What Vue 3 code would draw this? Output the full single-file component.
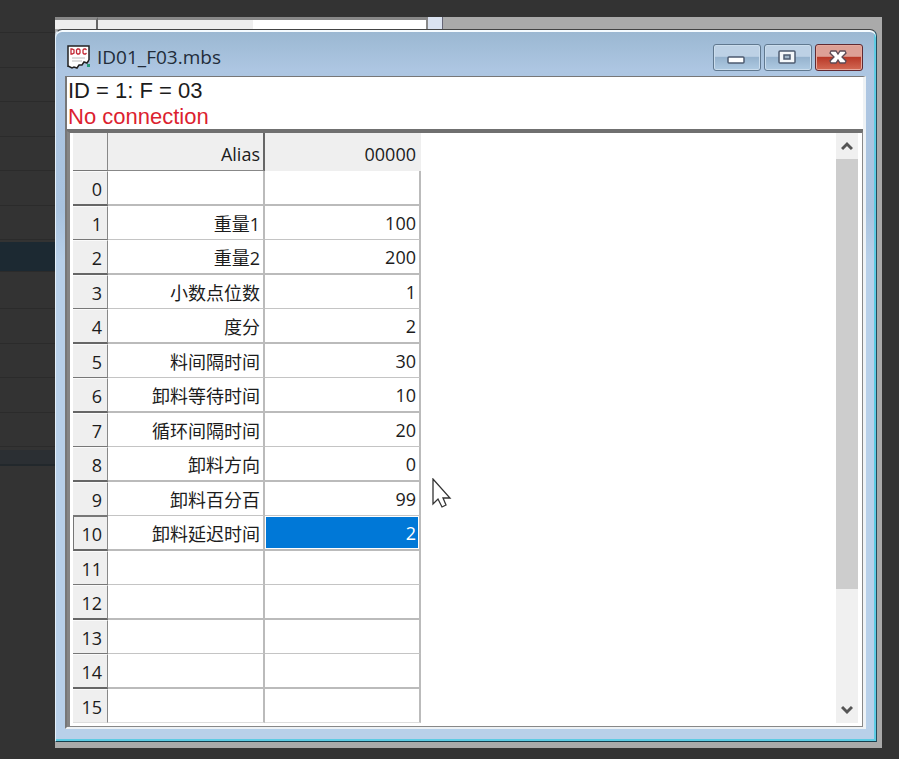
<template>
  <div class="page">
    <div class="backdrop" aria-hidden="true">
      <div
        v-for="n in 13"
        :key="n"
        class="backdrop-row"
        :class="{ active: n === 8 }"
      ></div>
      <div class="backdrop-bar"></div>
    </div>
    <div class="workspace">
      <div class="behind" aria-hidden="true">
        <span class="behind-head"></span>
        <span class="behind-cell"></span>
        <span class="behind-blank"></span>
        <span class="behind-edge"></span>
      </div>
      <section class="window">
        <header class="title-bar">
          <svg class="doc-icon" viewBox="0 0 24 24" aria-hidden="true">
            <path
              d="M1 1H22V15L20 18L17 17L15 20L12 20L10 23L7 22L5 23L1 21Z"
              fill="#fff"
            />
            <path
              d="M1 22V1H22V15"
              fill="none"
              stroke="#222"
              stroke-width="1.5"
            />
            <path
              d="M1 21L5 23L7 22L10 23L12 20H15L17 17L20 18L22 15"
              fill="none"
              stroke="#222"
              stroke-width="1.5"
            />
            <path
              d="M4 4V9H5L7 8V5L5 4ZM10.500 4H12L13 5V8L12 9H10.500L9.500 8V5ZM19.500 5L18.500 4H17L16 5V8L17 9H18.500L19.500 8"
              fill="none"
              stroke="#c32a36"
              stroke-width="1.3"
            />
            <path d="M5 13H18M5 16H15" stroke="#bbb" stroke-width="1" />
            <path d="M20 19H23V22H20Z" fill="#269b77" />
          </svg>
          <h1 class="title">ID01_F03.mbs</h1>
          <div class="controls">
            <button type="button" class="control" aria-label="Minimize">
              <svg viewBox="0 0 46 25">
                <rect x="14" y="12" width="16" height="6" rx="1" fill="#fff" stroke="#4d5b70" stroke-width="1.5" />
              </svg>
            </button>
            <button type="button" class="control" aria-label="Maximize">
              <svg viewBox="0 0 46 25">
                <rect x="14" y="6" width="16" height="12" rx="1" fill="#f5f8fa" stroke="#4d5b70" stroke-width="1.5" />
                <rect x="19" y="10" width="6" height="4" fill="#9fb4c6" stroke="#4d5b70" stroke-width="1.5" />
              </svg>
            </button>
            <button type="button" class="control close" aria-label="Close">
              <svg viewBox="0 0 46 25">
                <path
                  d="M15 6H20L22 9L24 6H29L30 8L26 12L30 16L29 18H24L22 15L20 18H15L14 16L18 12L14 8Z"
                  fill="#fff"
                  stroke="#5b4a55"
                  stroke-width="1.3"
                />
              </svg>
            </button>
          </div>
        </header>
        <div class="client">
          <div class="status">
            <p>ID = 1: F = 03</p>
            <p class="error">No connection</p>
          </div>
          <div class="grid-frame">
            <div class="grid-area">
              <table class="grid">
                <thead>
                  <tr>
                    <th class="index"></th>
                    <th class="alias">Alias</th>
                    <th class="value">00000</th>
                  </tr>
                </thead>
                <tbody>
                  <tr
                    v-for="(row, index) in rows"
                    :key="index"
                    :class="{ selected: index === selectedIndex }"
                    @click="selectedIndex = index"
                  >
                    <th class="index">{{ index }}</th>
                    <td>{{ row.alias }}</td>
                    <td class="value">
                      <span>{{ row.value }}</span>
                    </td>
                  </tr>
                </tbody>
              </table>
            </div>
            <div class="scrollbar">
              <button type="button" aria-label="Scroll up">
                <svg viewBox="0 0 12 10">
                  <path d="M1 8L6 3L11 8" />
                </svg>
              </button>
              <div class="track">
                <div class="thumb"></div>
              </div>
              <button type="button" aria-label="Scroll down">
                <svg viewBox="0 0 12 10">
                  <path d="M1 2L6 7L11 2" />
                </svg>
              </button>
            </div>
          </div>
        </div>
      </section>
    </div>
    <svg class="pointer" viewBox="0 0 20 30" aria-hidden="true">
      <path
        d="M1 1V26L6 21L10 29L14 27L11 20H18Z"
        fill="#fff"
        stroke="#333"
        stroke-width="1.3"
      />
    </svg>
  </div>
</template>

<script setup>
import { ref } from "vue";

const selectedIndex = ref(10);

const rows = [
  { alias: "", value: "" },
  { alias: "重量1", value: 100 },
  { alias: "重量2", value: 200 },
  { alias: "小数点位数", value: 1 },
  { alias: "度分", value: 2 },
  { alias: "料间隔时间", value: 30 },
  { alias: "卸料等待时间", value: 10 },
  { alias: "循环间隔时间", value: 20 },
  { alias: "卸料方向", value: 0 },
  { alias: "卸料百分百", value: 99 },
  { alias: "卸料延迟时间", value: 2 },
  { alias: "", value: "" },
  { alias: "", value: "" },
  { alias: "", value: "" },
  { alias: "", value: "" },
  { alias: "", value: "" },
];
</script>

<style>
body {
  margin: 0;
  background: #333;
}
</style>

<style scoped>
.page {
  position: relative;
  box-sizing: border-box;
  display: flex;
  min-height: 100vh;
  padding: 17px 17px 11px 55px;
  background: #333;
  font-family: "Open Sans", "Noto Sans CJK SC", sans-serif;
  font-size: 18px;
  color: #1c1c1c;
}

/* 背景表格 */
.backdrop {
  position: absolute;
  top: 0;
  left: 0;
  width: 55px;
}
.backdrop-row {
  box-sizing: border-box;
  height: 34px;
  border-bottom: 1px solid #2b2b2b;
}
.backdrop-row:nth-child(even) {
  height: 35px;
}
.backdrop-row:first-child {
  height: 33px;
}
.backdrop-row.active {
  height: 32px;
  margin-bottom: 3px;
  background: #1c2932;
  border-top: 2px solid #333;
}
.backdrop-bar {
  height: 14px;
  margin-top: 3px;
  background: #2b2f33;
  border-bottom: 2px solid #22282c;
}

.workspace {
  position: relative;
  box-sizing: border-box;
  display: flex;
  flex: 1;
  flex-direction: column;
  min-width: 0;
  padding: 0 5px 6px 0;
  background: #aaa;
}
.behind {
  display: flex;
  height: 12px;
}
.behind span {
  box-sizing: border-box;
  border-top: 3px solid #888;
}
.behind-head {
  width: 43px;
  background: #eee;
  border-right: 2px solid #666;
}
.behind-cell {
  width: 155px;
  background: #eee;
}
.behind-blank {
  width: 173px;
  background: #fff;
}
.behind .behind-edge {
  width: 17px;
  background: #dbe3f1;
  border-top: 0;
  border-right: 1px solid #667;
  border-left: 2px solid #888;
}

/* 窗口 */
.window {
  display: flex;
  flex: 1;
  flex-direction: column;
  box-sizing: border-box;
  padding: 0 10px 12px 9px;
  background: linear-gradient(#9ab7d1, #adc6e2 40px, #a9c3df 180px, #b8d0e9 230px);
  border: 1px solid #444;
  border-left-color: #e4f0fa;
  border-right-color: #244a5c;
  border-bottom-color: #173f4c;
  border-radius: 7px 7px 0 0;
  box-shadow: inset 0 2px #f5fbff, inset -2px -2px #5dcbe3;
}
.title-bar {
  display: flex;
  align-items: center;
  box-sizing: border-box;
  height: 46px;
  padding: 8px 3px 0 2px;
}
.doc-icon {
  width: 24px;
  height: 24px;
}
.title {
  flex: 1;
  margin: 0 0 0 6px;
  font-size: 19px;
  font-weight: 400;
  line-height: 28px;
  color: #222c3a;
}
.controls {
  display: flex;
  gap: 3px;
}
.control {
  box-sizing: border-box;
  width: 48px;
  height: 27px;
  padding: 0;
  background: linear-gradient(#bdd1e5 0 45%, #96b3ce 50%, #afcae2);
  border: 1px solid #60788f;
  border-radius: 3px;
  box-shadow: inset 0 0 0 1px #cbdded;
}
.control.close {
  background: linear-gradient(#dda096 0 45%, #b93a29 50%, #d36a55);
  border-color: #602a32;
  box-shadow: inset 0 0 0 1px #e7a99d;
}
.control svg {
  display: block;
  width: 100%;
  height: 100%;
}

.client {
  display: flex;
  flex: 1;
  flex-direction: column;
  box-sizing: border-box;
  background: #fff;
  border: 2px solid #777;
  border-top-width: 1px;
  border-right: 3px solid #eef2f5;
  border-bottom: 2px solid #eef2f5;
}
.status {
  box-sizing: border-box;
  height: 54px;
  padding: 1px 0 0 1px;
  border-bottom: 2px solid #707070;
  font-family: "Liberation Sans", sans-serif;
  font-size: 22px;
  line-height: 26px;
}
.status p {
  margin: 0;
}
.status .error {
  color: #dc1f30;
}

.grid-frame {
  display: flex;
  flex: 1;
  border-style: solid;
  border-width: 2px 1px 1px 3px;
  border-color: #707070 #888 #888 #858585;
}
.grid-area {
  flex: 1;
  min-width: 0;
  padding: 0 0 3px 3px;
}
.grid {
  width: 348px;
  table-layout: fixed;
  border-spacing: 0;
}
.grid th,
.grid td {
  box-sizing: border-box;
  height: 34px;
  padding: 2px 3px 0 0;
  border-right: 2px solid #bbb;
  border-bottom: 1px solid #c4c4c4;
  font-weight: 400;
  line-height: 28px;
  text-align: right;
}
.grid tbody tr:nth-child(odd) > * {
  height: 35px;
  border-bottom: 2px solid #bbb;
}
.grid th {
  background: #efefef;
}
.grid .index {
  width: 35px;
  border-right: 1px solid #888;
  border-bottom-color: #777;
}
.grid thead th {
  height: 38px;
  padding-top: 4px;
  border-bottom-color: #888;
}
.grid thead .alias {
  width: 157px;
  border-right-color: #666;
}
.grid thead .value {
  border-right-color: #efefef;
  border-bottom-color: #efefef;
}
.grid tbody .index {
  padding-right: 5px;
  border-top: 1px solid #fafafa;
}
.grid tbody tr:nth-child(odd) .index {
  border-bottom-color: #666;
}
.grid tbody tr:last-child > * {
  border-bottom-color: #ddd;
}
.grid tbody .value {
  padding: 0;
}
.grid tbody .value span {
  display: block;
  height: 31px;
  margin-right: 1px;
  padding-right: 2px;
  line-height: 32px;
}
.grid tbody .selected .value span {
  margin-left: 1px;
  background: #0078d7;
  color: #fff;
}
.grid tbody .selected .index {
  border-top-color: #777;
  border-left: 1px solid #777;
}

.scrollbar {
  display: flex;
  flex-direction: column;
  width: 22px;
  margin: 0 4px 3px 0;
  background: #f0f0f0;
}
.scrollbar button {
  display: flex;
  align-items: center;
  justify-content: center;
  width: 100%;
  height: 26px;
  padding: 0;
  background: #f0f0f0;
  border: 0;
}
.scrollbar svg {
  width: 12px;
  height: 10px;
  fill: none;
  stroke: #555;
  stroke-width: 3;
}
.track {
  flex: 1;
}
.thumb {
  height: 80%;
  background: #cdcdcd;
}

/* 鼠标指针 */
.pointer {
  position: absolute;
  top: 478px;
  left: 432px;
  width: 20px;
  height: 30px;
}
</style>
